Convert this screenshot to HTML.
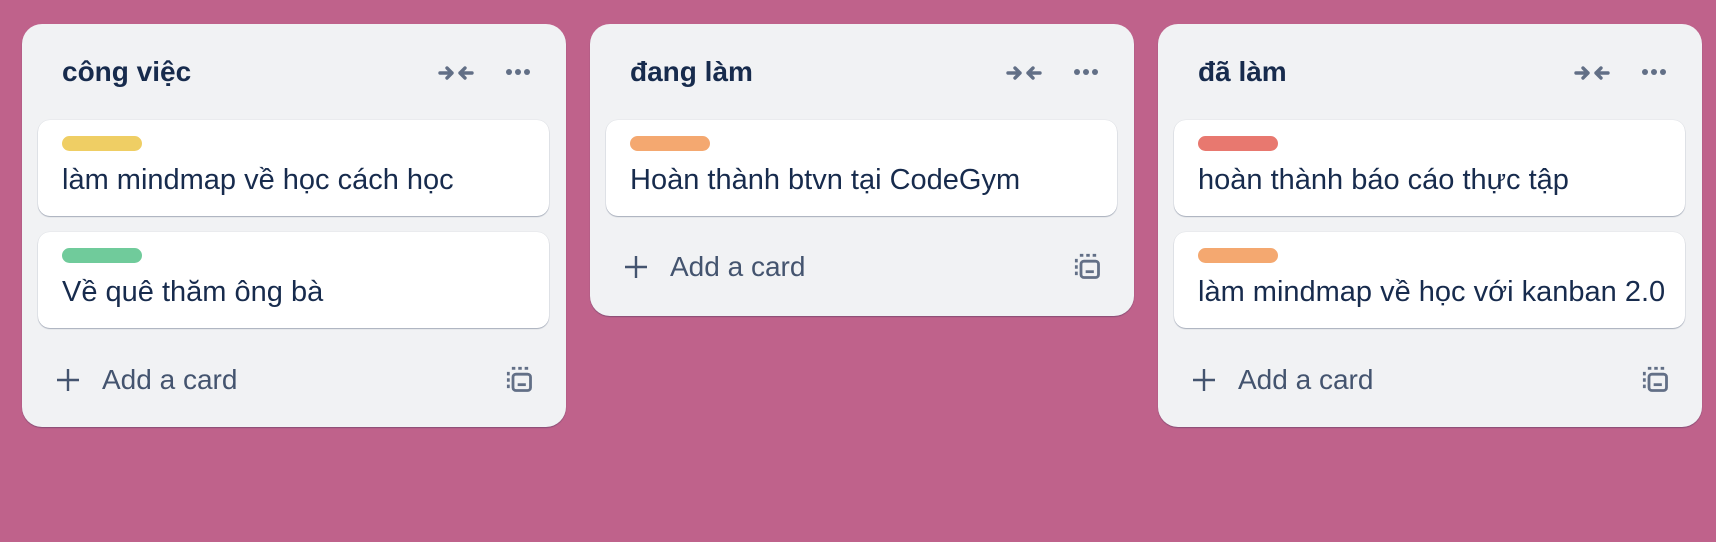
<!DOCTYPE html>
<html><head><meta charset="utf-8"><style>
*{box-sizing:border-box;margin:0;padding:0}
body{width:1716px;height:542px;background:#bf628b;font-family:"Liberation Sans",sans-serif;position:relative;overflow:hidden}
.col{position:absolute;top:24px;width:544px;background:#f1f2f4;border-radius:20px;box-shadow:0 1px 1px rgba(9,30,66,.3)}
.title{position:absolute;left:40px;top:32px;font-size:28px;font-weight:bold;color:#172b4d}
.ic{position:absolute;top:40px}
.card{position:absolute;left:16px;width:511px;height:96px;background:#fff;border-radius:12px;box-shadow:0 1px 1px rgba(9,30,66,.3),0 0 1px rgba(9,30,66,.2)}
.lab{position:absolute;left:24px;top:16px;width:80px;height:15px;border-radius:8px}
.txt{position:absolute;left:24px;top:44px;font-size:29px;color:#172b4d;white-space:nowrap}
.add{position:absolute;left:34px;font-size:28px;color:#44546f;height:32px;line-height:32px}
.add span{margin-left:22px}
.tpl{position:absolute;right:32px}
</style></head><body>

<div class="col" style="left:22px;height:403px">
  <div class="title">công việc</div>
  <svg class="ic" style="left:415px" width="38" height="18" viewBox="0 0 38 18" fill="none" stroke="#626f86" stroke-width="3.4" stroke-linecap="round" stroke-linejoin="round"><path d="M3 9h12M10 4l5 5-5 5M35 9H23M28 4l-5 5 5 5"/></svg>
  <svg class="ic" style="left:483px;top:44px" width="26" height="8" viewBox="0 0 26 8" fill="#626f86"><circle cx="4" cy="4" r="3"/><circle cx="13" cy="4" r="3"/><circle cx="22" cy="4" r="3"/></svg>
  <div class="card" style="top:96px"><div class="lab" style="background:#efce64"></div><div class="txt">làm mindmap về học cách học</div></div>
  <div class="card" style="top:208px"><div class="lab" style="background:#70cb9b"></div><div class="txt">Về quê thăm ông bà</div></div>
  <div class="add" style="top:340px"><svg width="24" height="24" viewBox="0 0 24 24" stroke="#44546f" stroke-width="2.4" style="vertical-align:-3px"><path d="M12 1v22M1 12h22"/></svg><span>Add a card</span></div>
  <svg class="tpl" style="top:342px" width="28" height="28" viewBox="0 0 24 24" fill="none" stroke="#626f86" stroke-width="2.4"><path d="M2 19V5M5 2h14" stroke-dasharray="3 2.5"/><rect x="6" y="7" width="15" height="14" rx="2.5"/><path d="M10 16h7"/></svg>
</div>

<div class="col" style="left:590px;height:292px">
  <div class="title">đang làm</div>
  <svg class="ic" style="left:415px" width="38" height="18" viewBox="0 0 38 18" fill="none" stroke="#626f86" stroke-width="3.4" stroke-linecap="round" stroke-linejoin="round"><path d="M3 9h12M10 4l5 5-5 5M35 9H23M28 4l-5 5 5 5"/></svg>
  <svg class="ic" style="left:483px;top:44px" width="26" height="8" viewBox="0 0 26 8" fill="#626f86"><circle cx="4" cy="4" r="3"/><circle cx="13" cy="4" r="3"/><circle cx="22" cy="4" r="3"/></svg>
  <div class="card" style="top:96px"><div class="lab" style="background:#f4a870"></div><div class="txt">Hoàn thành btvn tại CodeGym</div></div>
  <div class="add" style="top:227px"><svg width="24" height="24" viewBox="0 0 24 24" stroke="#44546f" stroke-width="2.4" style="vertical-align:-3px"><path d="M12 1v22M1 12h22"/></svg><span>Add a card</span></div>
  <svg class="tpl" style="top:229px" width="28" height="28" viewBox="0 0 24 24" fill="none" stroke="#626f86" stroke-width="2.4"><path d="M2 19V5M5 2h14" stroke-dasharray="3 2.5"/><rect x="6" y="7" width="15" height="14" rx="2.5"/><path d="M10 16h7"/></svg>
</div>

<div class="col" style="left:1158px;height:403px">
  <div class="title">đã làm</div>
  <svg class="ic" style="left:415px" width="38" height="18" viewBox="0 0 38 18" fill="none" stroke="#626f86" stroke-width="3.4" stroke-linecap="round" stroke-linejoin="round"><path d="M3 9h12M10 4l5 5-5 5M35 9H23M28 4l-5 5 5 5"/></svg>
  <svg class="ic" style="left:483px;top:44px" width="26" height="8" viewBox="0 0 26 8" fill="#626f86"><circle cx="4" cy="4" r="3"/><circle cx="13" cy="4" r="3"/><circle cx="22" cy="4" r="3"/></svg>
  <div class="card" style="top:96px"><div class="lab" style="background:#e8786f"></div><div class="txt">hoàn thành báo cáo thực tập</div></div>
  <div class="card" style="top:208px"><div class="lab" style="background:#f4a870"></div><div class="txt">làm mindmap về học với kanban 2.0</div></div>
  <div class="add" style="top:340px"><svg width="24" height="24" viewBox="0 0 24 24" stroke="#44546f" stroke-width="2.4" style="vertical-align:-3px"><path d="M12 1v22M1 12h22"/></svg><span>Add a card</span></div>
  <svg class="tpl" style="top:342px" width="28" height="28" viewBox="0 0 24 24" fill="none" stroke="#626f86" stroke-width="2.4"><path d="M2 19V5M5 2h14" stroke-dasharray="3 2.5"/><rect x="6" y="7" width="15" height="14" rx="2.5"/><path d="M10 16h7"/></svg>
</div>

</body></html>
